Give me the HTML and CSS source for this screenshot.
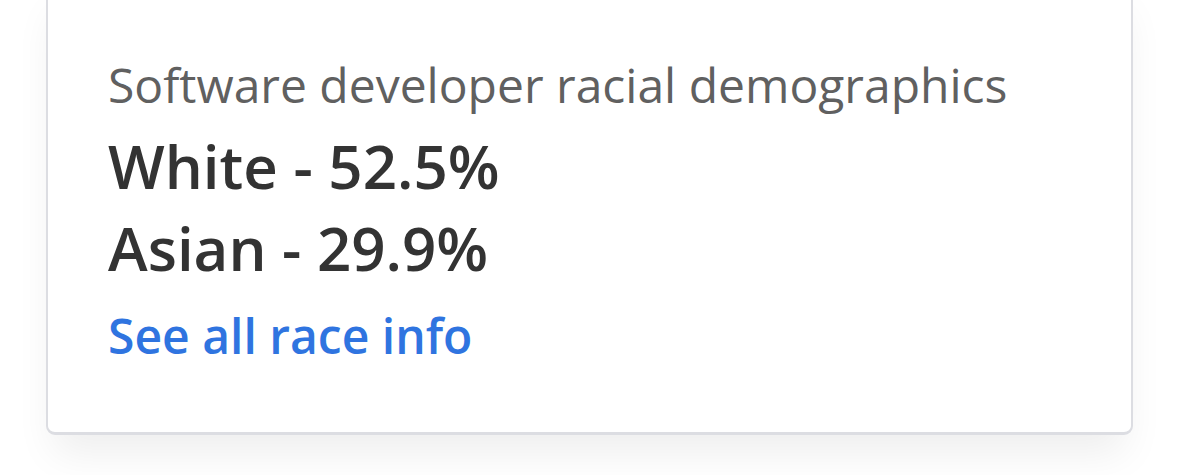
FILE: index.html
```html
<!doctype html>
<html lang="en-US">
  <head>
    <meta charset="utf-8" />
    <title>Software developer racial demographics</title>
    <link rel="stylesheet" href="styles.css">
  </head>
  <body>
<div class="page">
  <div class="card">
    <p class="label">Software developer racial demographics</p>
    <p class="stat">White - 52.5%</p>
    <p class="stat">Asian - 29.9%</p>
    <a class="more" href="#">See all race info</a>
  </div>
</div>
  </body>
</html>
```

FILE: styles.css
```css
body {
  margin: 0;
  background-color: #ffffff;
  font-family: "Open Sans", "Liberation Sans", sans-serif;
}

.page {
  padding-left: 46px;
  padding-right: 46px;
  height: 475px;
  overflow: hidden;
}

.card {
  margin-top: -20px;
  border: 2px solid #dcdde2;
  border-bottom-width: 3px;
  border-radius: 9px;
  background-color: #ffffff;
  padding: 73px 60px 65px 60px;
  box-shadow: 0 26px 40px -8px rgba(0, 0, 0, 0.07);
}

.label {
  margin: 0 0 10px 0;
  font-size: 48px;
  line-height: 60px;
  color: #606060;
}

.stat {
  margin: 0;
  font-size: 60px;
  font-weight: 600;
  line-height: 82px;
  color: #333333;
}

.more {
  display: block;
  margin-top: 16px;
  font-size: 48px;
  font-weight: 600;
  line-height: 62px;
  color: #2f74e0;
  text-decoration: none;
}
```
